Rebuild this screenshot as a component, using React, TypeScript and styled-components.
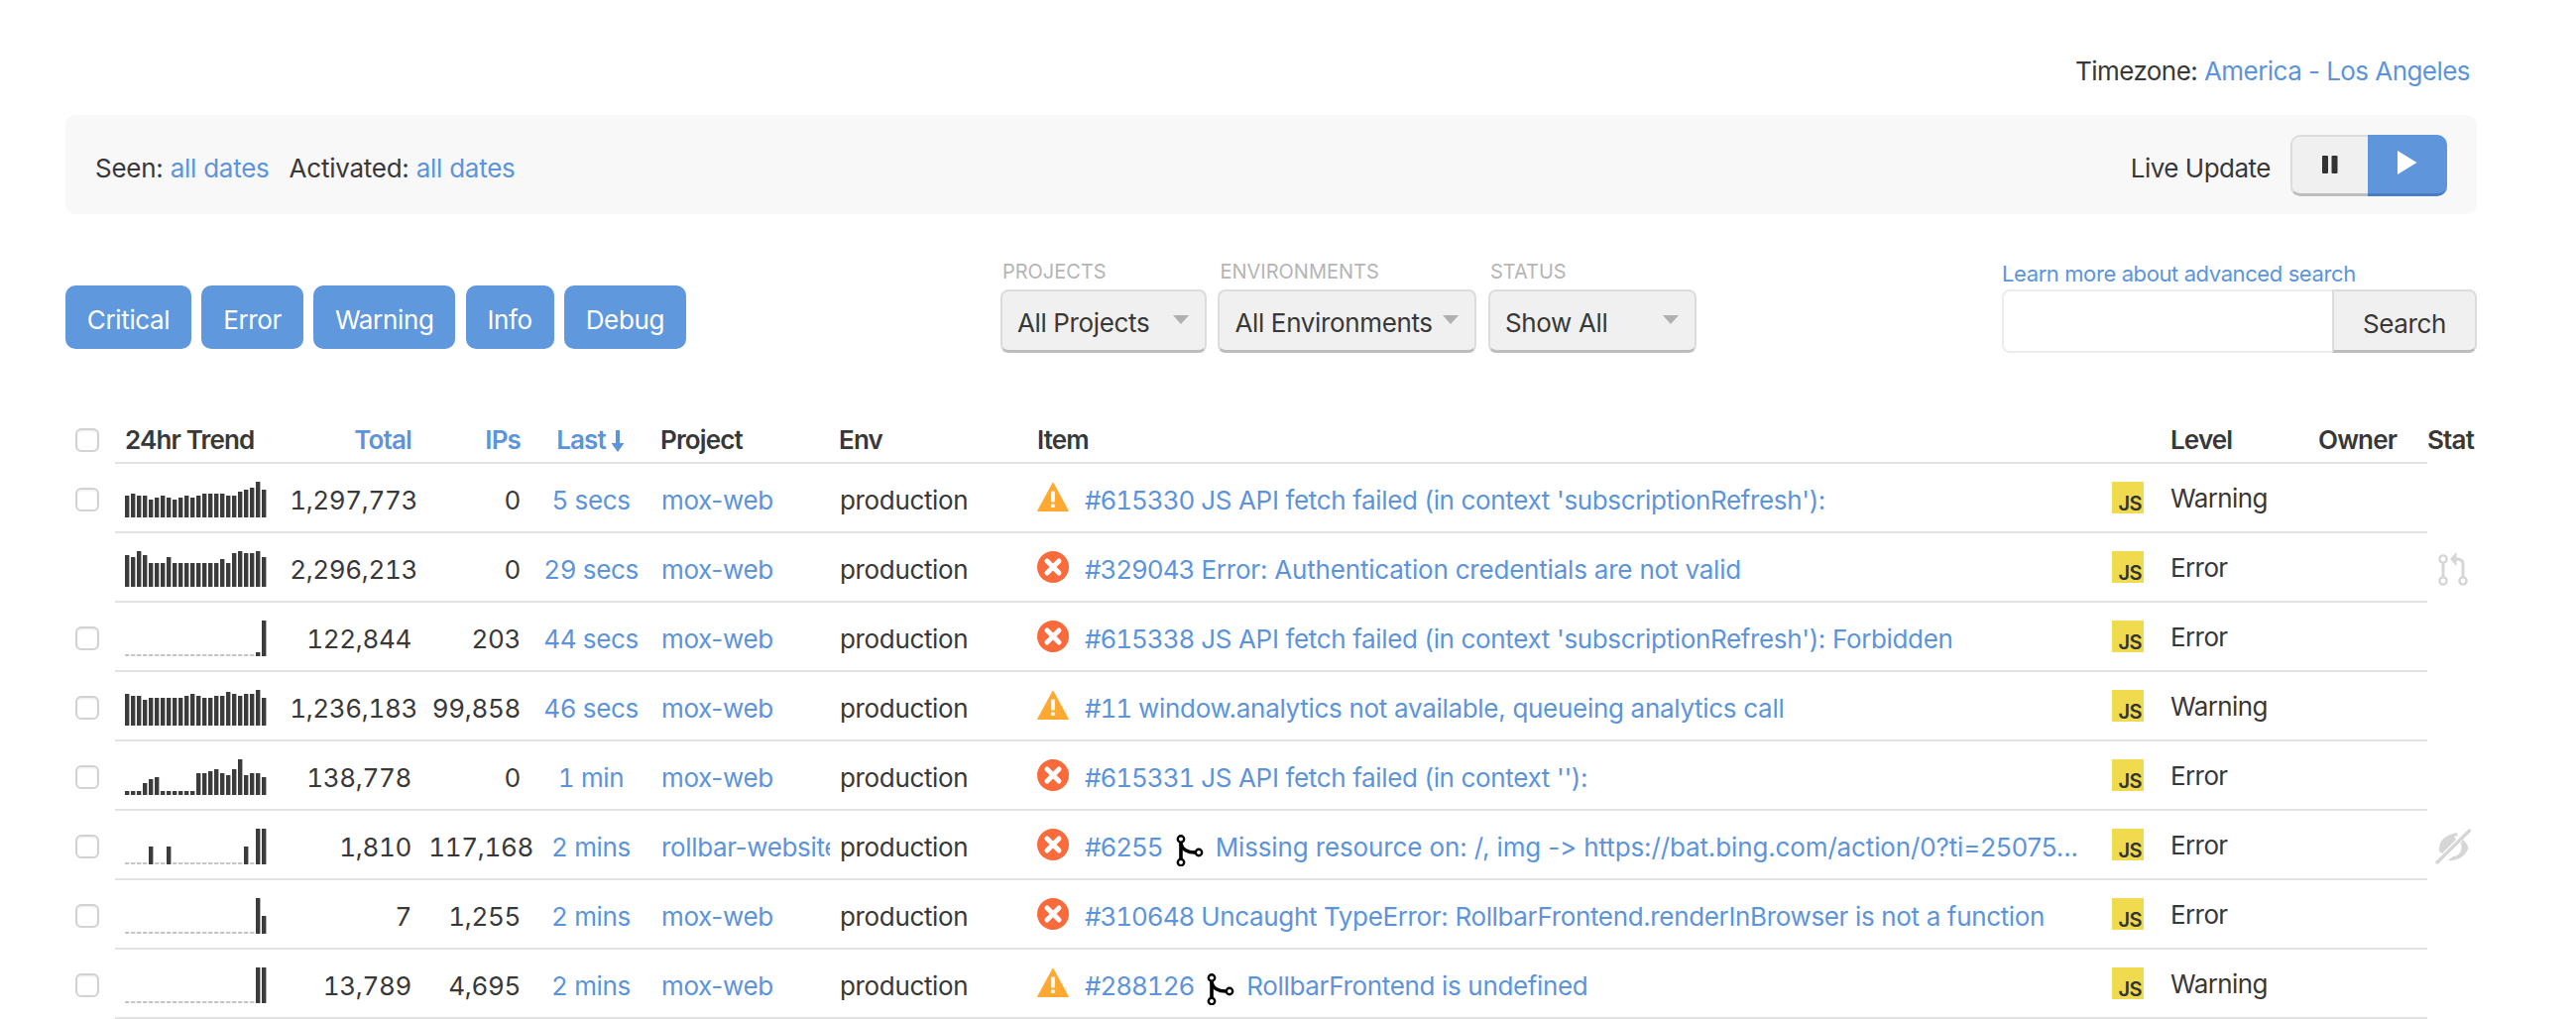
import React from "react";
import styled, { createGlobalStyle } from "styled-components";

const LINK = "#5c94dc";
const TEXT = "#383838";

const GlobalStyle = createGlobalStyle`
  html, body {
    margin: 0;
    padding: 0;
    background: #fff;
    overflow: hidden;
  }
  body {
    font-family: Inter, "Noto Sans", "Liberation Sans", sans-serif;
    font-size: 26px;
    letter-spacing: -0.35px;
    color: ${TEXT};
  }
  * { box-sizing: border-box; }
`;

type RowData = {
  checked: boolean;
  trend: number[];
  total: string;
  totalOver?: number;
  ips: string;
  ipsOver?: number;
  last: string;
  project: string;
  level: "Warning" | "Error";
  id: string;
  branch?: boolean;
  title: string;
  tracking?: number;
  status?: "pull" | "muted";
};

const idle = (bars: Record<number, number>) =>
  Array.from({ length: 24 }, (_, i) => bars[i] ?? 0);

const rows: RowData[] = [
  {
    checked: true,
    trend: [22, 24, 22, 22, 18, 20, 22, 20, 18, 20, 22, 20, 22, 24, 24, 24, 24, 22, 22, 26, 28, 30, 36, 28],
    total: "1,297,773",
    totalOver: 6,
    ips: "0",
    last: "5 secs",
    project: "mox-web",
    level: "Warning",
    id: "#615330",
    title: "JS API fetch failed (in context 'subscriptionRefresh'):",
  },
  {
    checked: false,
    trend: [32, 30, 36, 32, 24, 24, 24, 30, 24, 24, 24, 24, 24, 24, 24, 24, 28, 24, 34, 36, 34, 34, 36, 30],
    total: "2,296,213",
    totalOver: 6,
    ips: "0",
    last: "29 secs",
    project: "mox-web",
    level: "Error",
    id: "#329043",
    title: "Error: Authentication credentials are not valid",
    tracking: -0.2,
    status: "pull",
  },
  {
    checked: true,
    trend: idle({ 22: 4, 23: 36 }),
    total: "122,844",
    ips: "203",
    last: "44 secs",
    project: "mox-web",
    level: "Error",
    id: "#615338",
    title: "JS API fetch failed (in context 'subscriptionRefresh'): Forbidden",
  },
  {
    checked: true,
    trend: [32, 30, 30, 26, 28, 28, 28, 28, 28, 28, 30, 32, 30, 28, 28, 30, 30, 34, 32, 30, 32, 32, 36, 28],
    total: "1,236,183",
    totalOver: 6,
    ips: "99,858",
    last: "46 secs",
    project: "mox-web",
    level: "Warning",
    id: "#11",
    title: "window.analytics not available, queueing analytics call",
    tracking: -0.3,
  },
  {
    checked: true,
    trend: [4, 4, 4, 12, 16, 18, 4, 4, 4, 4, 4, 4, 22, 22, 24, 26, 22, 20, 26, 36, 20, 22, 22, 18],
    total: "138,778",
    ips: "0",
    last: "1 min",
    project: "mox-web",
    level: "Error",
    id: "#615331",
    title: "JS API fetch failed (in context ''):",
  },
  {
    checked: true,
    trend: idle({ 4: 18, 7: 18, 20: 18, 22: 36, 23: 36 }),
    total: "1,810",
    ips: "117,168",
    ipsOver: 13,
    last: "2 mins",
    project: "rollbar-website",
    level: "Error",
    id: "#6255",
    branch: true,
    title: "Missing resource on: /, img -> https://bat.bing.com/action/0?ti=25075...",
    tracking: -0.13,
    status: "muted",
  },
  {
    checked: true,
    trend: idle({ 22: 36, 23: 18 }),
    total: "7",
    ips: "1,255",
    last: "2 mins",
    project: "mox-web",
    level: "Error",
    id: "#310648",
    title: "Uncaught TypeError: RollbarFrontend.renderInBrowser is not a function",
  },
  {
    checked: true,
    trend: idle({ 22: 36, 23: 36 }),
    total: "13,789",
    ips: "4,695",
    last: "2 mins",
    project: "mox-web",
    level: "Warning",
    id: "#288126",
    branch: true,
    title: "RollbarFrontend is undefined",
  },
];

const levels = ["Critical", "Error", "Warning", "Info", "Debug"];
const filters = [
  { label: "PROJECTS", value: "All Projects", width: 208 },
  { label: "ENVIRONMENTS", value: "All Environments", width: 261 },
  { label: "STATUS", value: "Show All", width: 210 },
];

function Trend({ data }: { data: number[] }) {
  return (
    <svg width="144" height="36" viewBox="0 0 144 36">
      {data.map((h, i) =>
        h === 0 ? (
          <rect key={i} x={i * 6} y={34} width={4.4} height={2} fill="#c6c6c6" />
        ) : (
          <rect key={i} x={i * 6} y={36 - h} width={4.4} height={h} fill="#3b3b3b" />
        )
      )}
    </svg>
  );
}

function WarningIcon() {
  return (
    <svg width="32" height="30" viewBox="0 0 32 30">
      <path d="M16 1 L31.5 29.5 H0.5 Z" fill="#ffa933" stroke="#ffa933" strokeLinejoin="round" />
      <rect x="14.2" y="9.5" width="3.6" height="11" rx="1" fill="#fff" />
      <rect x="14.2" y="22.5" width="3.6" height="3.6" rx="0.8" fill="#fff" />
    </svg>
  );
}

function ErrorIcon() {
  return (
    <svg width="32" height="32" viewBox="0 0 32 32">
      <circle cx="16" cy="16" r="16" fill="#fa6a3b" />
      <path d="M10 10 L22 22 M22 10 L10 22" stroke="#fff" strokeWidth="5" strokeLinecap="round" />
    </svg>
  );
}

function BranchIcon() {
  return (
    <svg width="28" height="32" viewBox="0 0 28 32" fill="none" stroke="#000">
      <path d="M5 7 V25" strokeWidth="3.6" />
      <path d="M5 9 C6 15 12 18 19 18" strokeWidth="3.6" />
      <circle cx="5" cy="4.5" r="3.2" strokeWidth="2.4" fill="#fff" />
      <circle cx="5" cy="28" r="3.2" strokeWidth="2.4" fill="#fff" />
      <circle cx="23" cy="18" r="3.2" strokeWidth="2.4" fill="#fff" />
    </svg>
  );
}

function PullIcon() {
  return (
    <svg width="30" height="36" viewBox="0 0 30 36" fill="none" stroke="#d6d6d6">
      <path d="M5 12 V26" strokeWidth="3" />
      <path d="M25 26 V13 Q25 8 19 8 H16" strokeWidth="3" />
      <path d="M12 8 L18.5 1 V15 Z" fill="#d6d6d6" stroke="none" />
      <circle cx="5" cy="8" r="3.6" strokeWidth="2.4" />
      <circle cx="5" cy="30" r="3.6" strokeWidth="2.4" />
      <circle cx="25" cy="30" r="3.6" strokeWidth="2.4" />
    </svg>
  );
}

function MutedIcon() {
  return (
    <svg width="36" height="36" viewBox="0 0 36 36" fill="#d6d6d6">
      <path d="M4 23 C3 13 10 6 22 4 L23 7 L19 8 L21 11 L7 25 Z" />
      <path d="M28 11 C32 15 34 18 33 21 C30 28 22 33 13 32 L18 28 C24 28 28 22 26 14 Z" />
      <path d="M2 34 L34.5 2" stroke="#d6d6d6" strokeWidth="3.4" strokeLinecap="round" />
    </svg>
  );
}

export default function App() {
  return (
    <Page>
      <GlobalStyle />
      <Timezone>
        Timezone: <Link>America - Los Angeles</Link>
      </Timezone>

      <DateBar>
        <DateFilters>
          Seen: <Link>all dates</Link>
          <DateGap />
          Activated: <Link>all dates</Link>
        </DateFilters>
        <LiveUpdate>
          Live Update
          <Toggle>
            <PauseButton>
              <svg width="16" height="18" viewBox="0 0 16 18" fill="#333">
                <rect x="0" y="0" width="6" height="18" rx="1" />
                <rect x="9.5" y="0" width="6" height="18" rx="1" />
              </svg>
            </PauseButton>
            <PlayButton>
              <svg width="20" height="24" viewBox="0 0 20 24" fill="#fff">
                <path d="M0 0 L19.5 12 L0 24 Z" />
              </svg>
            </PlayButton>
          </Toggle>
        </LiveUpdate>
      </DateBar>

      <Filters>
        <LevelButtons>
          {levels.map((l) => (
            <LevelButton key={l}>{l}</LevelButton>
          ))}
        </LevelButtons>
        <Selects>
          {filters.map((f) => (
            <SelectGroup key={f.label}>
              <SelectLabel>{f.label}</SelectLabel>
              <Select $width={f.width}>
                {f.value}
                <Caret />
              </Select>
            </SelectGroup>
          ))}
        </Selects>
        <SearchGroup>
          <LearnMore>Learn more about advanced search</LearnMore>
          <SearchRow>
            <SearchInput />
            <SearchButton>Search</SearchButton>
          </SearchRow>
        </SearchGroup>
      </Filters>

      <Table>
        <HeadRow>
          <CheckCell $head>
            <Checkbox />
          </CheckCell>
          <HeadCells>
            <HeadCell $pad={11}>24hr Trend</HeadCell>
            <HeadCell $align="right" $link>
              Total
            </HeadCell>
            <HeadCell $align="right" $link>
              IPs
            </HeadCell>
            <HeadCell $align="center" $link>
              Last
              <SortArrow viewBox="0 0 14 24" width="14" height="24">
                <path d="M7 1 V18" stroke={LINK} strokeWidth="4" />
                <path d="M0.5 14 H13.5 L7 23 Z" fill={LINK} />
              </SortArrow>
            </HeadCell>
            <HeadCell>Project</HeadCell>
            <HeadCell>Env</HeadCell>
            <HeadCell $pad={1}>Item</HeadCell>
            <HeadCell />
            <HeadCell>Level</HeadCell>
            <HeadCell>Owner</HeadCell>
          </HeadCells>
          <StatusHead>Stat</StatusHead>
        </HeadRow>

        {rows.map((r) => (
          <Row key={r.id}>
            <CheckCell>{r.checked && <Checkbox />}</CheckCell>
            <Cells>
              <TrendCell>
                <Trend data={r.trend} />
              </TrendCell>
              <NumberCell $over={r.totalOver}>{r.total}</NumberCell>
              <NumberCell $over={r.ipsOver}>{r.ips}</NumberCell>
              <LastCell>{r.last}</LastCell>
              <ProjectCell>{r.project}</ProjectCell>
              <TextCell>production</TextCell>
              <ItemCell>
                <ItemIcon>{r.level === "Warning" ? <WarningIcon /> : <ErrorIcon />}</ItemIcon>
                <ItemTitle $tracking={r.tracking}>
                  <ItemId>{r.id}</ItemId>
                  {r.branch ? (
                    <BranchWrap>
                      <BranchIcon />
                    </BranchWrap>
                  ) : (
                    " "
                  )}
                  {r.title}
                </ItemTitle>
              </ItemCell>
              <JsCell>
                <JsBadge>JS</JsBadge>
              </JsCell>
              <LevelCell>{r.level}</LevelCell>
              <div />
            </Cells>
            <StatusCell $kind={r.status}>
              {r.status === "pull" && <PullIcon />}
              {r.status === "muted" && <MutedIcon />}
            </StatusCell>
          </Row>
        ))}
      </Table>
    </Page>
  );
}

const Page = styled.div`
  width: 2598px;
  height: 1028px;
  padding: 55px 100px 0 66px;
  overflow: hidden;
`;

const Link = styled.span`
  color: ${LINK};
`;

const Timezone = styled.div`
  height: 34px;
  line-height: 34px;
  margin-bottom: 27px;
  padding-right: 7px;
  text-align: right;
  letter-spacing: -0.55px;
`;

const DateBar = styled.div`
  height: 100px;
  display: flex;
  align-items: center;
  justify-content: space-between;
  padding: 6px 30px 0;
  background: #f8f8f8;
  border-radius: 10px;
`;

const DateFilters = styled.div`
  letter-spacing: -0.25px;
`;

const DateGap = styled.span`
  display: inline-block;
  width: 20px;
`;

const LiveUpdate = styled.div`
  display: flex;
  align-items: center;
  gap: 20px;
  letter-spacing: -0.5px;
`;

const Toggle = styled.div`
  display: flex;
  height: 62px;
  margin-top: -4px;
`;

const PauseButton = styled.div`
  width: 78px;
  display: flex;
  align-items: center;
  justify-content: center;
  padding-bottom: 2px;
  background: #f0f0f0;
  border: 2px solid #dcdcdc;
  border-bottom: 3px solid #bdbdbd;
  border-right: none;
  border-radius: 10px 0 0 10px;
`;

const PlayButton = styled.div`
  width: 80px;
  display: flex;
  align-items: center;
  justify-content: center;
  padding-bottom: 4px;
  background: #5f96db;
  border-bottom: 3px solid #4a7cc0;
  border-radius: 0 10px 10px 0;
`;

const Filters = styled.div`
  height: 94px;
  margin-top: 46px;
  display: flex;
  align-items: flex-end;
`;

const LevelButtons = styled.div`
  display: flex;
  gap: 10.3px;
  margin-bottom: 4px;
`;

const LevelButton = styled.div`
  height: 64px;
  padding: 4px 21.8px 0;
  display: flex;
  align-items: center;
  color: #fff;
  background: #6098dd;
  border-radius: 10px;
`;

const Selects = styled.div`
  display: flex;
  gap: 11.5px;
  margin-left: 317px;
`;

const SelectGroup = styled.div`
  display: flex;
  flex-direction: column;
`;

const SelectLabel = styled.div`
  height: 30px;
  padding-left: 2px;
  font-size: 20px;
  line-height: 24px;
  letter-spacing: 0;
  color: #b5b5b5;
`;

const Select = styled.div<{ $width: number }>`
  width: ${(p) => p.$width}px;
  height: 64px;
  padding: 4px 16px 0 15px;
  display: flex;
  align-items: center;
  justify-content: space-between;
  background: #f0f0f0;
  border: 2px solid #dcdcdc;
  border-bottom: 3px solid #bdbdbd;
  border-radius: 8px;
`;

const Caret = styled.span`
  width: 0;
  height: 0;
  margin-top: -6px;
  border-left: 8px solid transparent;
  border-right: 8px solid transparent;
  border-top: 9px solid #b0b0b0;
`;

const SearchGroup = styled.div`
  margin-left: auto;
  width: 479px;
`;

const LearnMore = styled.div`
  height: 30px;
  padding-top: 1px;
  font-size: 22px;
  line-height: 26px;
  letter-spacing: -0.4px;
  color: ${LINK};
`;

const SearchRow = styled.div`
  display: flex;
  height: 64px;
`;

const SearchInput = styled.div`
  flex: 1;
  background: #fff;
  border: 2px solid #ececec;
  border-right: none;
  border-radius: 8px 0 0 8px;
`;

const SearchButton = styled.div`
  width: 146px;
  padding-top: 6px;
  display: flex;
  align-items: center;
  justify-content: center;
  background: #f0f0f0;
  border: 2px solid #dcdcdc;
  border-bottom: 3px solid #bdbdbd;
  border-radius: 0 8px 8px 0;
`;

const Table = styled.div`
  margin-top: 42px;
`;

const columns = "160px 139px 110px 142px 180px 199px 1084px 60px 149px 109px";

const HeadRow = styled.div`
  display: flex;
  height: 70px;
`;

const HeadCells = styled.div`
  width: 2332px;
  display: grid;
  grid-template-columns: ${columns};
  border-bottom: 2px solid #e2e2e2;
  font-weight: 600;
  letter-spacing: -0.85px;
`;

const HeadCell = styled.div<{ $align?: string; $link?: boolean; $pad?: number }>`
  padding-top: 30px;
  margin-left: -1px;
  padding-left: ${(p) => p.$pad ?? 0}px;
  text-align: ${(p) => p.$align ?? "left"};
  color: ${(p) => (p.$link ? LINK : TEXT)};
  white-space: nowrap;
`;

const SortArrow = styled.svg`
  margin-left: 5px;
  vertical-align: -4px;
`;

const StatusHead = styled.div`
  width: 50px;
  padding-top: 30px;
  font-weight: 600;
  letter-spacing: -0.8px;
  overflow: hidden;
`;

const Row = styled.div`
  display: flex;
  height: 70px;
`;

const CheckCell = styled.div<{ $head?: boolean }>`
  width: 50px;
  padding: ${(p) => (p.$head ? "34px" : "24px")} 0 0 10px;
`;

const Checkbox = styled.div`
  width: 24px;
  height: 24px;
  background: #fff;
  border: 2px solid #d2d2d2;
  border-radius: 6px;
  box-shadow: inset 0 1px 2px rgba(0, 0, 0, 0.08);
`;

const Cells = styled.div`
  width: 2332px;
  display: grid;
  grid-template-columns: ${columns};
  border-bottom: 2px solid #e2e2e2;
`;

const TrendCell = styled.div`
  padding: 18px 0 0 10px;
  line-height: 0;
`;

const TextCell = styled.div`
  padding-top: 20px;
  line-height: 34px;
  white-space: nowrap;
`;

const NumberCell = styled(TextCell)<{ $over?: number }>`
  text-align: right;
  font-variant-numeric: tabular-nums;
  margin-right: ${(p) => -(p.$over ?? 0)}px;
`;

const LastCell = styled(TextCell)`
  text-align: center;
  font-variant-numeric: tabular-nums;
  color: ${LINK};
`;

const ProjectCell = styled(TextCell)`
  color: ${LINK};
  overflow: hidden;
  margin-right: 10px;
`;

const ItemCell = styled.div`
  display: flex;
  gap: 16px;
  padding-right: 30px;
  min-width: 0;
`;

const ItemIcon = styled.div`
  flex: none;
  width: 32px;
  padding-top: 18px;
  line-height: 0;
`;

const ItemTitle = styled(TextCell)<{ $tracking?: number }>`
  flex: 1;
  min-width: 0;
  color: ${LINK};
  letter-spacing: ${(p) => p.$tracking ?? -0.35}px;
  overflow: hidden;
`;

const ItemId = styled.span`
  font-variant-numeric: tabular-nums;
  letter-spacing: -1.05px;
`;

const BranchWrap = styled.span`
  display: inline-block;
  width: 53px;
  height: 32px;
  padding-left: 13px;
  vertical-align: -10px;
`;

const JsCell = styled.div`
  padding-top: 18px;
`;

const JsBadge = styled.div`
  width: 32px;
  height: 32px;
  padding: 0 2px 0 0;
  display: flex;
  align-items: flex-end;
  justify-content: flex-end;
  font-size: 20px;
  line-height: 20px;
  letter-spacing: -0.5px;
  font-weight: 600;
  color: #333;
  background: #f0db4f;
`;

const LevelCell = styled.div`
  padding-top: 18px;
  margin-left: -1px;
  line-height: 34px;
  letter-spacing: -0.6px;
`;

const StatusCell = styled.div<{ $kind?: string }>`
  width: 50px;
  padding: ${(p) => (p.$kind === "muted" ? "18px 0 0 8px" : "18px 0 0 11px")};
  line-height: 0;
`;
